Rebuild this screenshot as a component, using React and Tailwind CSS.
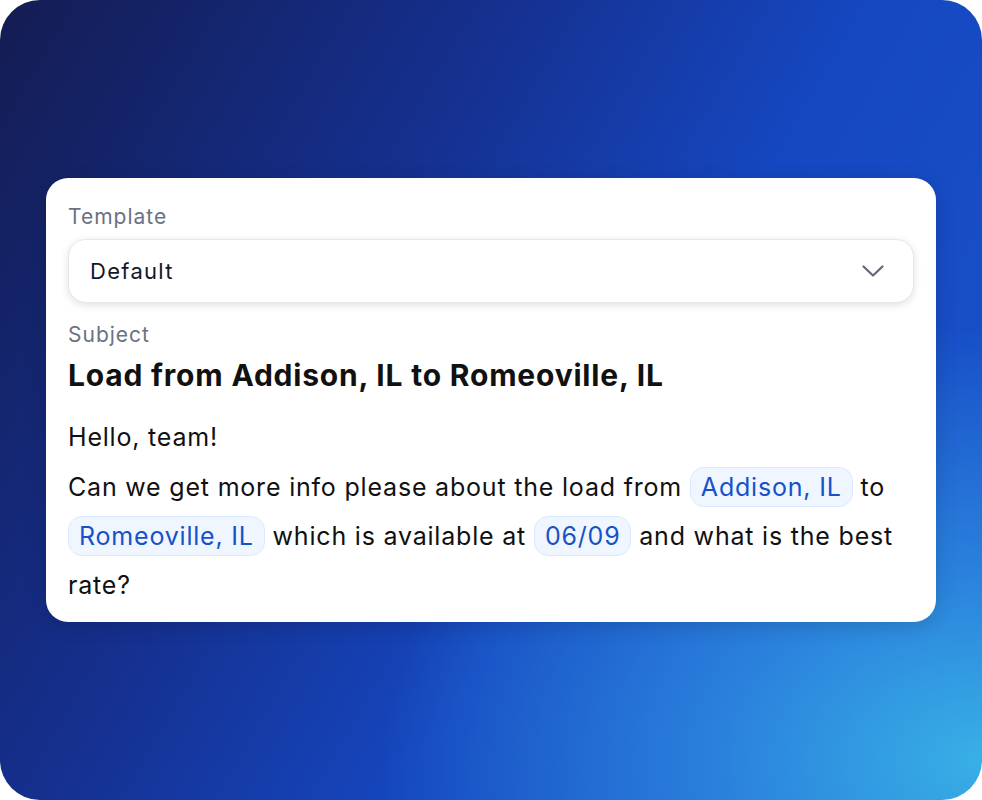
const Chip = ({ children }) => (
  <span className="inline-block rounded-[14px] border border-[#dbeafe] bg-[#eff6ff] px-[10px] leading-[38px] text-[#1652c8]">
    {children}
  </span>
);

const App = () => {
  return (
    <div className="w-[982px] h-[800px] bg-white font-['Inter',sans-serif]">
      <div className="w-full h-full rounded-[40px] overflow-hidden bg-[radial-gradient(ellipse_85%_75%_at_100%_95%,#38b0e6_0%,#2a80dc_32%,rgba(26,72,200,0)_72%),linear-gradient(120deg,#141c52_0%,#15308f_35%,#1547c0_60%,#1a55cc_100%)] flex items-start pt-[178px] pl-[46px]">
        <div className="w-[890px] bg-white rounded-[22px] px-[22px] pt-[26px] pb-[12px] shadow-[0_4px_20px_rgba(0,0,0,0.15)]">
          <div className="text-[21px] leading-[26px] tracking-[1px] text-[#6b7184]">Template</div>
          <div className="mt-[9px] h-[64px] flex items-center justify-between rounded-[18px] border border-[#e5e7eb] bg-white pl-[21px] pr-[29px] shadow-[0_2px_8px_rgba(0,0,0,0.12)]">
            <span className="text-[22px] tracking-[1.3px] text-[#111827]">Default</span>
            <svg width="22" height="12" viewBox="0 0 22 12" fill="none" stroke="#62667a" strokeWidth="2.2" strokeLinecap="round" strokeLinejoin="round">
              <path d="M1.5 1.5L11 10.5L20.5 1.5" />
            </svg>
          </div>
          <div className="mt-[19px] text-[21px] leading-[26px] tracking-[1px] text-[#6b7184]">Subject</div>
          <div className="mt-[9px] text-[30px] leading-[36px] font-bold tracking-[0.8px] text-[#111111]">
            Load from Addison, IL to Romeoville, IL
          </div>
          <div className="mt-[28px] text-[25px] tracking-[0.8px] text-[#111111]">
            <p className="leading-[32px]">Hello, team!</p>
            <p className="mt-[10px] leading-[49px]">
              Can we get more info please about the load from <Chip>Addison, IL</Chip> to{" "}
              <Chip>Romeoville, IL</Chip> which is available at <Chip>06/09</Chip> and what is the best rate?
            </p>
          </div>
        </div>
      </div>
    </div>
  );
};

export default App;
